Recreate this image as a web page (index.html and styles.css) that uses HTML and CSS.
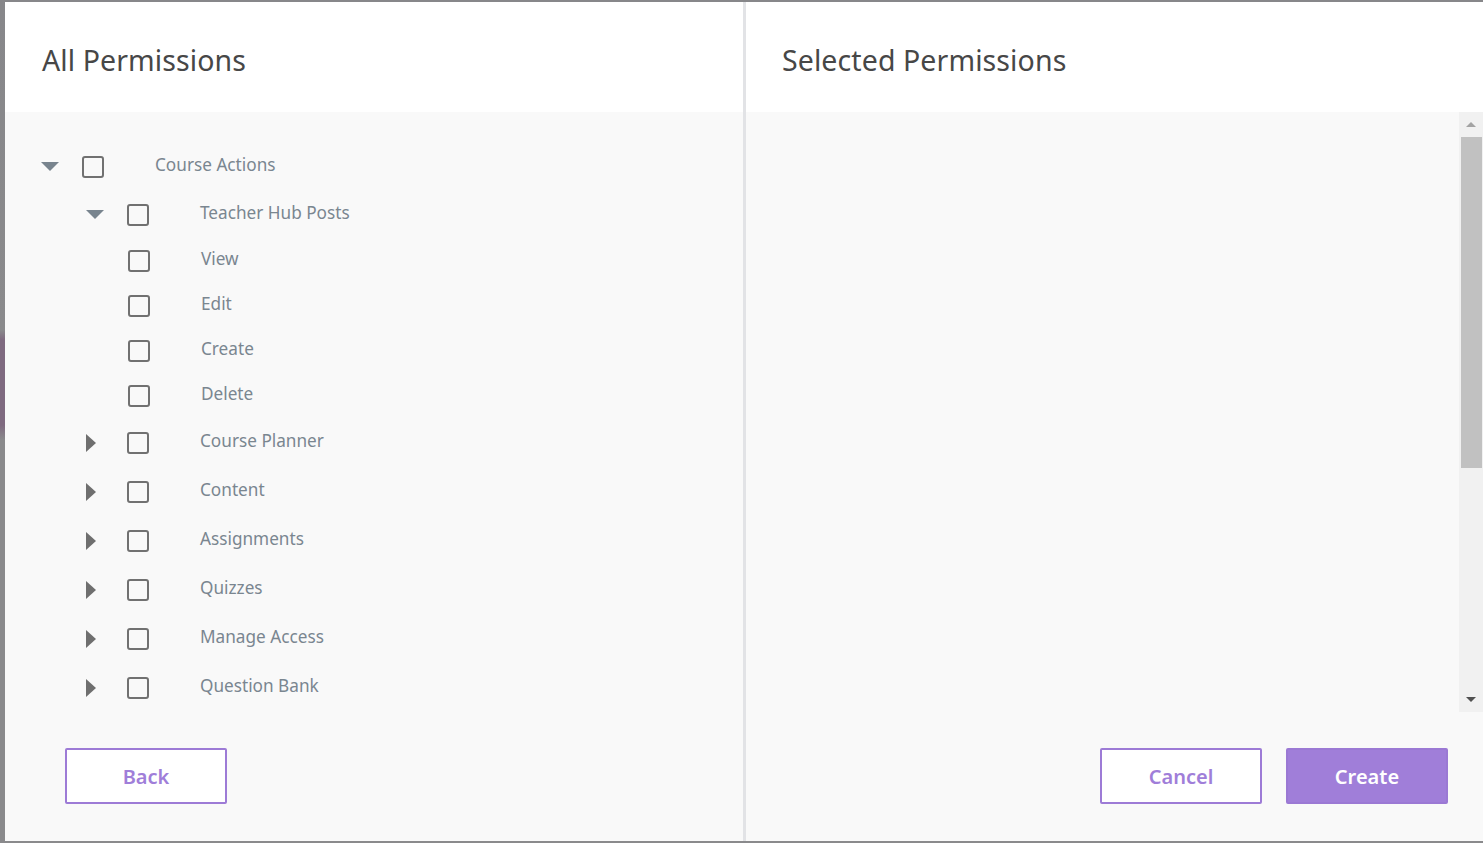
FILE: index.html
```html
<!DOCTYPE html>
<html>
<head>
<meta charset="utf-8">
<link rel="stylesheet" href="styles.css">
</head>
<body>
<div class="modal">
  <section class="panel panel-left">
    <header class="panel-head"><h2 class="title">All Permissions</h2></header>
    <div class="panel-body">
      <div class="tree">
        <div class="row row-parent lvl1"><span class="toggle"><span class="tri tri-down"></span></span><span class="cb"></span><span class="label">Course Actions</span></div>
        <div class="row row-mid lvl2"><span class="toggle"><span class="tri tri-down"></span></span><span class="cb"></span><span class="label">Teacher Hub Posts</span></div>
        <div class="row row-leaf lvl2"><span class="toggle"></span><span class="cb"></span><span class="label">View</span></div>
        <div class="row row-leaf lvl2"><span class="toggle"></span><span class="cb"></span><span class="label">Edit</span></div>
        <div class="row row-leaf lvl2"><span class="toggle"></span><span class="cb"></span><span class="label">Create</span></div>
        <div class="row row-leaf lvl2"><span class="toggle"></span><span class="cb"></span><span class="label">Delete</span></div>
        <div class="row row-parent lvl2"><span class="toggle"><span class="tri tri-right"></span></span><span class="cb"></span><span class="label">Course Planner</span></div>
        <div class="row row-parent lvl2"><span class="toggle"><span class="tri tri-right"></span></span><span class="cb"></span><span class="label">Content</span></div>
        <div class="row row-parent lvl2"><span class="toggle"><span class="tri tri-right"></span></span><span class="cb"></span><span class="label">Assignments</span></div>
        <div class="row row-parent lvl2"><span class="toggle"><span class="tri tri-right"></span></span><span class="cb"></span><span class="label">Quizzes</span></div>
        <div class="row row-parent lvl2"><span class="toggle"><span class="tri tri-right"></span></span><span class="cb"></span><span class="label">Manage Access</span></div>
        <div class="row row-parent lvl2"><span class="toggle"><span class="tri tri-right"></span></span><span class="cb"></span><span class="label">Question Bank</span></div>
      </div>
      <footer class="panel-foot foot-left">
        <button class="btn btn-outline">Back</button>
      </footer>
    </div>
  </section>
  <div class="divider"></div>
  <section class="panel panel-right">
    <header class="panel-head"><h2 class="title">Selected Permissions</h2></header>
    <div class="panel-body">
      <div class="scroll-area">
        <div class="scroll-content"></div>
        <div class="scrollbar">
          <div class="sb-btn"><span class="sb-arrow sb-up"></span></div>
          <div class="sb-track"><div class="sb-thumb"></div></div>
          <div class="sb-btn"><span class="sb-arrow sb-down"></span></div>
        </div>
      </div>
      <footer class="panel-foot foot-right">
        <button class="btn btn-outline">Cancel</button>
        <button class="btn btn-fill">Create</button>
      </footer>
    </div>
  </section>
</div>
</body>
</html>
```

FILE: styles.css
```css
* { box-sizing: border-box; }
html, body { margin: 0; padding: 0; }
body {
  width: 1483px;
  height: 843px;
  overflow: hidden;
  background: linear-gradient(to bottom, #87878a 0px, #8a8a8c 330px, #7f6a80 340px, #7f6a80 425px, #8a8a8c 440px, #8a8a8c 843px);
  font-family: "Noto Sans", "Open Sans", sans-serif;
  padding: 2px 0 2px 5px;
}
.modal {
  display: flex;
  height: 839px;
  width: 1478px;
}
.panel {
  display: flex;
  flex-direction: column;
  height: 100%;
}
.panel-left { width: 738px; }
.panel-right { width: 737px; }
.divider { width: 3px; background: #e2e3e6; }
.panel-head {
  height: 110px;
  background: #ffffff;
  display: flex;
  align-items: center;
  padding-left: 37px;
}
.panel-right .panel-head { padding-left: 36px; }
.title {
  margin: 0;
  font-weight: 400;
  font-size: 28.5px;
  color: #474747;
  letter-spacing: 0.1px;
  position: relative;
  top: 3px;
}
.panel-body {
  flex: 1;
  background: #f9f9f9;
  display: flex;
  flex-direction: column;
}
.tree {
  height: 600px;
  padding-top: 30px;
}
.row {
  display: flex;
  align-items: center;
}
.row-parent { height: 49px; }
.row-mid { height: 47px; }
.row-leaf { height: 45px; }
.lvl1 { padding-left: 36px; }
.lvl2 { padding-left: 81px; }
.toggle {
  width: 41px;
  height: 22px;
  display: flex;
  align-items: center;
}
.tri { display: block; width: 0; height: 0; }
.tri-down {
  border-left: 9px solid transparent;
  border-right: 9px solid transparent;
  border-top: 9px solid #78848e;
}
.tri-right {
  border-top: 9px solid transparent;
  border-bottom: 9px solid transparent;
  border-left: 10px solid #6f6f6f;
}
.row-leaf .cb { margin-left: 1px; }
.cb {
  width: 22px;
  height: 22px;
  border: 2px solid #717171;
  border-radius: 3px;
  flex: none;
}
.label {
  margin-left: 51px;
  font-size: 17.2px;
  color: #7a8690;
  position: relative;
  top: -2px;
}
.panel-foot {
  flex: 1;
  display: flex;
  align-items: flex-start;
  padding-top: 36px;
}
.foot-left { padding-left: 60px; }
.foot-right { justify-content: flex-end; padding-right: 35px; gap: 24px; }
.btn {
  width: 162px;
  height: 56px;
  border: 2px solid #9d7bd6;
  border-radius: 2px;
  font-family: "Noto Sans", "Open Sans", sans-serif;
  font-size: 20px;
  font-weight: 600;
  padding: 0;
}
.btn-outline { background: #ffffff; color: #a07ed9; }
.btn-fill { background: #a07ed9; color: #ffffff; border-color: #9b79d4; }
.scroll-area {
  height: 600px;
  display: flex;
}
.scroll-content { flex: 1; }
.scrollbar {
  width: 24px;
  background: #f1f1f1;
  display: flex;
  flex-direction: column;
}
.sb-btn {
  height: 25px;
  display: flex;
  align-items: center;
  justify-content: center;
}
.sb-arrow { width: 0; height: 0; display: block; }
.sb-up {
  border-left: 5px solid transparent;
  border-right: 5px solid transparent;
  border-bottom: 5px solid #a3a3a3;
}
.sb-down {
  border-left: 5px solid transparent;
  border-right: 5px solid transparent;
  border-top: 5px solid #505050;
}
.sb-track { flex: 1; padding: 0 1px 0 2px; }
.sb-thumb { height: 331px; background: #c1c1c1; }
```
